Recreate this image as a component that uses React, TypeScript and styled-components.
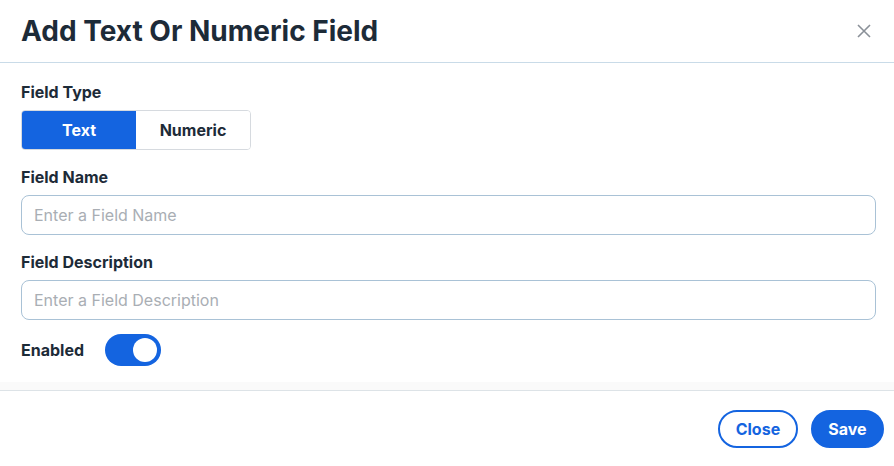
import styled, { createGlobalStyle } from 'styled-components'
import { useState } from 'react'

const GlobalStyle = createGlobalStyle`
    * { box-sizing: border-box; }
    body {
        margin: 0;
        background: #fff;
        font-family: Inter, "Noto Sans", sans-serif;
        color: #1d2b38;
    }
`

const Modal = styled.div`
    width: 894px;
    height: 466px;
    display: flex;
    flex-direction: column;
    background: #fff;
`
const Header = styled.div`
    height: 63px;
    flex-shrink: 0;
    display: flex;
    align-items: center;
    justify-content: space-between;
    padding: 0 22px 0 21px;
    border-bottom: 1px solid #c9dbe8;
`
const Title = styled.h1`
    margin: 0;
    font-size: 28px;
    font-weight: 700;
    color: #1d2b38;
`
const CloseIcon = styled.button`
    border: none;
    background: none;
    padding: 0;
    display: flex;
    cursor: pointer;
`
const Body = styled.div`
    flex: 1;
    padding: 19px 18px 0 21px;
    display: flex;
    flex-direction: column;
`
const Label = styled.label`
    display: block;
    font-size: 16px;
    font-weight: 700;
    color: #1d2b38;
    line-height: 20px;
    margin-bottom: 8px;
`
const Field = styled.div`
    margin-bottom: 17px;
`
const Segmented = styled.div`
    display: inline-flex;
    border: 1px solid #d6dadf;
    border-radius: 4px;
    overflow: hidden;
    height: 40px;
`
const Segment = styled.button<{ $active: boolean }>`
    width: 114px;
    border: none;
    font-family: inherit;
    font-size: 16px;
    font-weight: 700;
    cursor: pointer;
    background: ${p => p.$active ? '#1464e0' : '#fff'};
    color: ${p => p.$active ? '#fff' : '#1d2b38'};
`
const Input = styled.input`
    width: 100%;
    height: 40px;
    border: 1px solid #a9c2d6;
    border-radius: 8px;
    padding: 0 12px;
    font-family: inherit;
    font-size: 16px;
    color: #1d2b38;
    outline: none;

    &::placeholder {
        color: #a9aeb4;
    }
`
const ToggleRow = styled.div`
    display: flex;
    align-items: center;
    gap: 21px;
    margin-top: -3px;
`
const Toggle = styled.button<{ $on: boolean }>`
    position: relative;
    width: 56px;
    height: 32px;
    border: none;
    border-radius: 16px;
    padding: 0;
    cursor: pointer;
    background: ${p => p.$on ? '#1464e0' : '#c3c8cd'};
`
const Knob = styled.span<{ $on: boolean }>`
    position: absolute;
    top: 4px;
    left: ${p => p.$on ? '28px' : '4px'};
    width: 24px;
    height: 24px;
    border-radius: 50%;
    background: #fff;
`
const Band = styled.div`
    height: 9px;
    flex-shrink: 0;
    background: #fafafa;
    border-bottom: 1px solid #dde3e7;
`
const Footer = styled.div`
    height: 75px;
    flex-shrink: 0;
    display: flex;
    align-items: center;
    justify-content: flex-end;
    gap: 13px;
    padding: 0 10px 0 0;
`
const Button = styled.button<{ $primary?: boolean }>`
    height: 38px;
    padding: 0 15.5px;
    border-radius: 19px;
    border: 2px solid #1464e0;
    font-family: inherit;
    font-size: 16px;
    font-weight: 700;
    cursor: pointer;
    background: ${p => p.$primary ? '#1464e0' : '#fff'};
    color: ${p => p.$primary ? '#fff' : '#1464e0'};
`

export default function App() {
    const [type, setType] = useState<'text' | 'numeric'>('text')
    const [enabled, setEnabled] = useState(true)

    return (
        <Modal>
            <GlobalStyle />
            <Header>
                <Title>Add Text Or Numeric Field</Title>
                <CloseIcon aria-label="Close">
                    <svg width="16" height="16" viewBox="0 0 16 16">
                        <path d="M2 2L14 14M14 2L2 14" stroke="#8a9098" strokeWidth="1.6" />
                    </svg>
                </CloseIcon>
            </Header>
            <Body>
                <Field>
                    <Label>Field Type</Label>
                    <Segmented>
                        <Segment $active={type === 'text'} onClick={() => setType('text')}>Text</Segment>
                        <Segment $active={type === 'numeric'} onClick={() => setType('numeric')}>Numeric</Segment>
                    </Segmented>
                </Field>
                <Field>
                    <Label>Field Name</Label>
                    <Input placeholder="Enter a Field Name" />
                </Field>
                <Field>
                    <Label>Field Description</Label>
                    <Input placeholder="Enter a Field Description" />
                </Field>
                <ToggleRow>
                    <Label as="span" style={{ marginBottom: 0 }}>Enabled</Label>
                    <Toggle $on={enabled} onClick={() => setEnabled(!enabled)}>
                        <Knob $on={enabled} />
                    </Toggle>
                </ToggleRow>
            </Body>
            <Band />
            <Footer>
                <Button>Close</Button>
                <Button $primary>Save</Button>
            </Footer>
        </Modal>
    )
}
